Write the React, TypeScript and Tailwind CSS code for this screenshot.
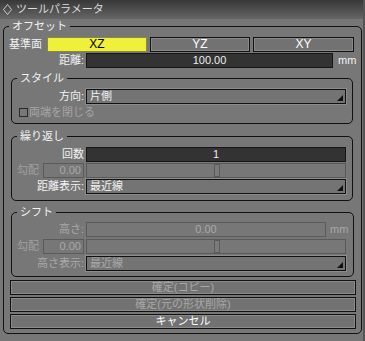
import React from 'react';

const font = "font-['Liberation_Sans','Noto_Sans_CJK_JP',sans-serif]";

function Corner() {
  return (
    <svg width="6" height="6" viewBox="0 0 6 6" className="absolute right-[2px] bottom-[2px]">
      <polygon points="6,0 6,6 0,6" fill="#111" />
    </svg>
  );
}

function Group({ title, className, children }: { title: string; className?: string; children: React.ReactNode }) {
  return (
    <fieldset className={`border border-[#111] rounded-[5px] px-[5px] ${className ?? ''}`}>
      <legend className="px-[3px] text-[11px] leading-[14px] text-[#f2f2f2]">{title}</legend>
      {children}
    </fieldset>
  );
}

function Label({ w, children, dim }: { w: string; children: React.ReactNode; dim?: boolean }) {
  return (
    <div className={`${w} shrink-0 text-right text-[11px] leading-[15px] ${dim ? 'text-[#a8a8a8]' : 'text-[#f2f2f2]'}`}>
      {children}
    </div>
  );
}

function Select({ value, dim }: { value: string; dim?: boolean }) {
  return (
    <div className="relative w-[260px] h-[15px] border border-[#111] bg-[#747474] shadow-[0_0_0_1px_#8c8c8c] pl-[3px] text-[11px] leading-[13px]">
      <span className={dim ? 'text-[#a8a8a8]' : 'text-[#f2f2f2]'}>{value}</span>
      <Corner />
    </div>
  );
}

function SlopeRow() {
  return (
    <div className="flex items-center h-[15px]">
      <div className="w-[22px] text-[11px] leading-[15px] text-[#a0a0a0]">勾配</div>
      <div className="ml-[4px] w-[41px] h-[15px] border border-[#5a5a5a] text-right pr-[2px] text-[11px] leading-[13px] text-[#a8a8a8]">
        0.00
      </div>
      <div className="ml-[2px] w-[260px] h-[15px] border border-[#5a5a5a] flex">
        <div className="ml-[127px] w-[6px] h-full border border-[#5a5a5a] bg-[#7a7a7a]" />
      </div>
    </div>
  );
}

function BigButton({ children, dim }: { children: React.ReactNode; dim?: boolean }) {
  return (
    <div
      className={`ml-[1px] w-[346px] h-[15px] border border-[#111] bg-[#727272] shadow-[inset_0_0_0_1px_#8a8a8a] text-center text-[11px] leading-[13px] ${
        dim ? 'text-[#a8a8a8]' : 'text-white'
      }`}
    >
      {children}
    </div>
  );
}

export default function App() {
  return (
    <div className={`w-[365px] h-[341px] bg-[#777777] border-r-2 border-[#555] ${font} select-none`}>
      {/* Title bar */}
      <div className="h-[19px] bg-gradient-to-b from-[#383838] to-[#666666] flex items-center pl-[3px]">
        <svg width="9" height="11" viewBox="0 0 9 11">
          <polygon points="4.5,0.5 8.5,5.5 4.5,10.5 0.5,5.5" fill="none" stroke="#c8c8c8" strokeWidth="1" />
        </svg>
        <span className="ml-[4px] text-[11px] leading-[15px] text-[#dcdcdc]">ツールパラメータ</span>
      </div>

      {/* Offset */}
      <Group title="オフセット" className="ml-[3px] w-[358px] pb-[4px]">
        <div className="mt-[4px] flex items-center h-[15px]">
          <div className="w-[38px] text-[11px] leading-[15px] text-[#f2f2f2]">基準面</div>
          <div className="flex gap-[3px]">
            <div className="w-[100px] h-[15px] border border-[#8a8a3a] bg-[#eef03a] text-center text-[12px] leading-[13px] text-black">XZ</div>
            <div className="w-[100px] h-[15px] border border-[#111] bg-[#727272] shadow-[inset_0_0_0_1px_#8a8a8a] text-center text-[12px] leading-[13px] text-white">YZ</div>
            <div className="w-[101px] h-[15px] border border-[#111] bg-[#727272] shadow-[inset_0_0_0_1px_#8a8a8a] text-center text-[12px] leading-[13px] text-white">XY</div>
          </div>
        </div>
        <div className="mt-[1px] flex items-center h-[15px]">
          <Label w="w-[75px]">距離:</Label>
          <div className="ml-[2px] w-[247px] h-[15px] border border-[#161616] bg-[#333333] text-center text-[11px] leading-[13px] text-[#eeeeee]">
            100.00
          </div>
          <div className="ml-[5px] text-[11px] leading-[15px] text-[#f2f2f2]">mm</div>
        </div>

        {/* Style */}
        <Group title="スタイル" className="mt-[3px] ml-[2px] w-[342px] pb-[4px]">
          <div className="mt-[4px] flex items-center h-[15px]">
            <Label w="w-[67px]">方向:</Label>
            <div className="ml-[2px]">
              <Select value="片側" />
            </div>
          </div>
          <div className="mt-[2px] ml-[2px] flex items-center h-[13px]">
            <div className="w-[9px] h-[9px] border border-[#2a2a2a] bg-[#777]" />
            <span className="ml-[1px] text-[11px] leading-[13px] text-[#a5a5a5]">両端を閉じる</span>
          </div>
        </Group>

        {/* Repeat */}
        <Group title="繰り返し" className="mt-[5px] ml-[2px] w-[342px] pb-[6px]">
          <div className="mt-[4px] flex flex-col gap-[1px]">
            <div className="flex items-center h-[15px]">
              <Label w="w-[67px]">回数</Label>
              <div className="ml-[2px] w-[260px] h-[15px] border border-[#161616] bg-[#333333] text-center text-[11px] leading-[13px] text-[#eeeeee]">
                1
              </div>
            </div>
            <SlopeRow />
            <div className="flex items-center h-[15px]">
              <Label w="w-[67px]">距離表示:</Label>
              <div className="ml-[2px]">
                <Select value="最近線" />
              </div>
            </div>
          </div>
        </Group>

        {/* Shift */}
        <Group title="シフト" className="mt-[4px] ml-[2px] w-[342px] pb-[5px]">
          <div className="mt-[3px] flex flex-col gap-[2px]">
            <div className="flex items-center h-[15px]">
              <Label w="w-[67px]" dim>高さ:</Label>
              <div className="ml-[2px] w-[240px] h-[15px] border border-[#5a5a5a] text-center text-[11px] leading-[13px] text-[#a8a8a8]">
                0.00
              </div>
              <div className="ml-[4px] text-[11px] leading-[15px] text-[#a8a8a8]">mm</div>
            </div>
            <SlopeRow />
            <div className="flex items-center h-[15px]">
              <Label w="w-[67px]" dim>高さ表示:</Label>
              <div className="ml-[2px]">
                <Select value="最近線" dim />
              </div>
            </div>
          </div>
        </Group>

        {/* Buttons */}
        <div className="mt-[3px] flex flex-col gap-[2px]">
          <BigButton dim>確定(コピー)</BigButton>
          <BigButton dim>確定(元の形状削除)</BigButton>
          <BigButton>キャンセル</BigButton>
        </div>
      </Group>
    </div>
  );
}
